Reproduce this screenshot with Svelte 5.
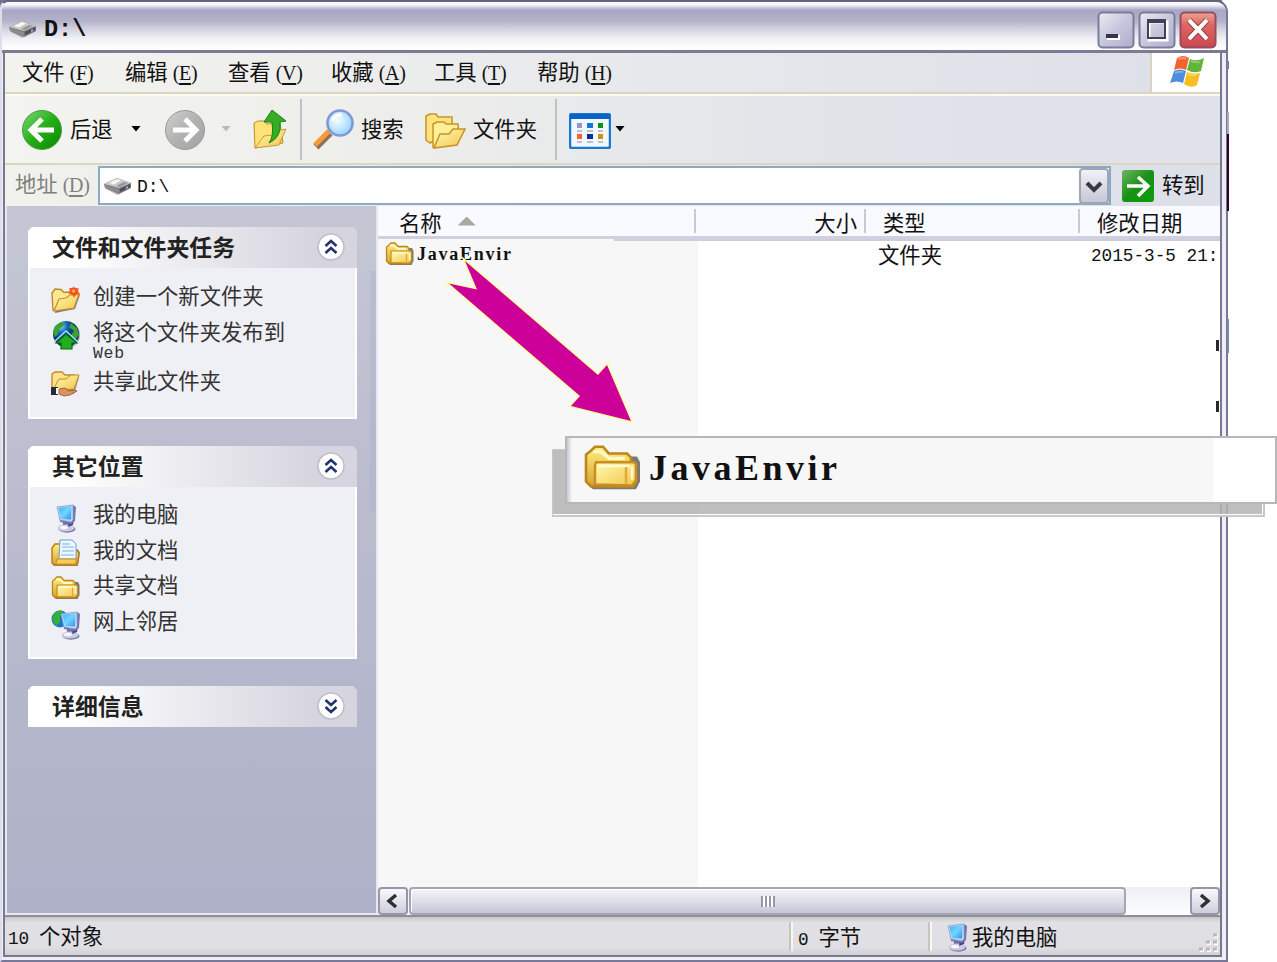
<script>
  const menus = [['文件', 'F'], ['编辑', 'E'], ['查看', 'V'], ['收藏', 'A'], ['工具', 'T'], ['帮助', 'H']];
  const tasks = [['newfolder', '创建一个新文件夹'], ['publish', '将这个文件夹发布到'], ['share', '共享此文件夹']];
  const places = [['computer', '我的电脑'], ['docs', '我的文档'], ['folder', '共享文档'], ['network', '网上邻居']];
</script>

{#snippet drive()}
  <svg class="drive" width="30" height="20" viewBox="0 0 30 20">
    <path d="M3 13l11 6 14-7v-3z" fill="#777" opacity=".45" />
    <path d="M1 8L14 2l14 5v5l-12 6L2 12z" fill="#77777a" />
    <path d="M1 8L14 2l14 5-12 5z" fill="#c9c9c8" />
    <path d="M6 7l8-4 4 1.500-7 4z" fill="#f7f7f7" />
    <path d="M13 10l8-4 4 1-8 4z" fill="#969696" />
    <path d="M2 9l14 4v4L2 12z" fill="#8b8b8c" />
    <path d="M17 13l10-5v3l-10 5z" fill="#4c4c53" />
    <path d="M23 11l2-1v2l-2 1z" fill="#a9a7e8" />
  </svg>
{/snippet}

{#snippet folderShape()}
  <path d="M3 23V8h24l1.500 3v10l-2 4H5z" fill="#444" opacity=".7" />
  <path d="M1.500 21V7l2-1.500L6 3h4l3 3.500h9l2 2v2.500l2.500 1v9L25 23.500H4z" fill="url(#foldBack)" stroke="#bd861c" stroke-width="1.300" />
  <path d="M6 22.500V12.500l.5-1.500h19l1 1v8.500l-2 2.500z" fill="url(#foldFront)" stroke="#c88e20" stroke-width="1.200" />
  <path d="M5 5.500h4l4 3.500h8" fill="none" stroke="#fff8c8" stroke-width="1.800" />
  <path d="M7.500 13h16M24.500 13v7" fill="none" stroke="#fffad4" stroke-width="1.300" />
  <path d="M21.500 13.500v8.500" stroke="#e2a83f" stroke-width="1.200" />
{/snippet}

{#snippet computerShape()}
  <path d="M12 18l10-1-3 10-7-1z" fill="#6865ab" />
  <ellipse cx="16" cy="26" rx="8.500" ry="3.700" fill="#77749f" />
  <ellipse cx="15" cy="25" rx="8.500" ry="3.500" fill="#cccbe3" />
  <path d="M18 18l5-2-1 6-5 2z" fill="#454499" />
  <path d="M7 4l15-2 3 2-1 14-4 3L9 19z" fill="#7576ad" />
  <path d="M6 4l16-2v15l-2 2-11-2z" fill="#c3d8f3" stroke="#8798c4" stroke-width=".7" />
  <path d="M7.500 5l13-2-.5 13.500-10-.5z" fill="url(#screen)" />
  <ellipse cx="13" cy="24.500" rx="4" ry="1.700" fill="#f9f8ff" />
{/snippet}

{#snippet icon(kind)}
  <svg class="small-icon" width="30" height="30" viewBox="0 0 30 30">
    {#if kind === 'folder'}
      {@render folderShape()}
    {:else if kind === 'computer'}
      {@render computerShape()}
    {:else if kind === 'newfolder'}
      <path d="M4 28l20-4 5-14-3-2-22 6z" fill="#444" opacity=".65" />
      <path d="M2 25L1 8l3-4 6 .5 3 3 9-1 2 5-2 12z" fill="#ffe794" stroke="#bd892c" stroke-width="1.400" />
      <path d="M3 26L8 14l7-1 4-3 9-1-5 14z" fill="url(#foldFront)" stroke="#c28e2c" stroke-width="1.200" />
      <path d="M22 1l2 3 4-1-1 3 2 3-4 1-2 3-2-4-4 0 2-3-1-3 4 0z" fill="#ff6b24" />
      <circle cx="23" cy="6.500" r="4" fill="#f65222" />
      <circle cx="22.500" cy="6" r="1.600" fill="#ffb45a" />
    {:else if kind === 'publish'}
      <circle cx="16" cy="15" r="13" fill="#444" opacity=".4" />
      <circle cx="15" cy="14" r="13" fill="url(#globe)" />
      <path d="M4 6l6-4 4 2-3 3-3 2-1 5-3 3-2-5zM20 3l6 5 2 7-4 5-4-5 3-4-5-4z" fill="#3ba234" />
      <path d="M15 14L5 23h5v6h11v-6h5z" fill="#24ad20" stroke="#096b11" stroke-width="1.200" />
      <path d="M3 22L15 11l12 11" fill="none" stroke="#a4e3ff" stroke-width="1.300" />
    {:else if kind === 'share'}
      <path d="M3 24l20 1 5-16-2-3-22 1z" fill="#555" opacity=".5" />
      <path d="M1 22V5l3-2h7l3 3h9l1 13z" fill="#ffe38a" stroke="#c38c24" stroke-width="1.400" />
      <path d="M2 21l6-11h7l5-4h8l-5 14z" fill="url(#foldFront)" stroke="#bf8a24" />
      <path d="M0 18h7v8H0z" fill="#26283b" /><path d="M5 19h4v6H5z" fill="#fff" />
      <path d="M8 20l6-1 4 3 6-1 2 1-7 4-6 1-5-2z" fill="#dc935f" stroke="#8e4d25" stroke-width=".8" />
    {:else if kind === 'docs'}
      <path d="M3 27h24l2-14-3-3H4z" fill="#555" opacity=".55" />
      <path d="M1 24V9l3-4h9v6h13l2 3-1 9-2 3H3z" fill="url(#foldBack)" stroke="#b37a16" stroke-width="1.400" />
      <path d="M8 19L9 1h12l4 4v15H7z" fill="#edf7ff" stroke="#729ace" />
      <path d="M11 5h8M11 8h12M11 12h12M10 16h13" stroke="#7bb3e4" stroke-width="1.200" />
      <path d="M6 20h19v5H5z" fill="#f7cd57" stroke="#c89223" />
    {:else}
      <circle cx="9" cy="9" r="8.500" fill="#1779ca" />
      <path d="M3 3l7-3 3 3-4 3v6l-4 4-4-6z" fill="#35af37" />
      <g transform="translate(4 0)">{@render computerShape()}</g>
    {/if}
  </svg>
{/snippet}

{#snippet chevron(down)}
  <svg class="chevron" width="30" height="30" viewBox="0 0 30 30">
    <circle cx="15" cy="15" r="13" fill="#fff" stroke="#bfc0ca" stroke-width="1.700" />
    <g transform={down ? 'rotate(180 15 15)' : ''} fill="none" stroke="#243369" stroke-width="2.600">
      <path d="M9.500 14l5.500-5 5.500 5M9.500 21l5.500-5 5.500 5" />
    </g>
  </svg>
{/snippet}

<svg class="definitions" width="0" height="0" aria-hidden="true">
  <defs>
    <linearGradient id="foldBack" x2="0" y2="1"><stop stop-color="#fff07e" /><stop offset="1" stop-color="#d7a032" /></linearGradient>
    <linearGradient id="foldFront" x2="1" y2="1"><stop stop-color="#fffab2" /><stop offset="1" stop-color="#f3c64b" /></linearGradient>
    <linearGradient id="screen" x2="1" y2="1"><stop stop-color="#3caeff" /><stop offset=".5" stop-color="#72d5ff" /><stop offset="1" stop-color="#2d91ed" /></linearGradient>
    <radialGradient id="globe" cx=".3" cy=".2"><stop stop-color="#8edafa" /><stop offset=".5" stop-color="#1767b4" /><stop offset="1" stop-color="#07366e" /></radialGradient>
    <linearGradient id="green" x2="1" y2="1"><stop stop-color="#80d779" /><stop offset=".5" stop-color="#24ae16" /><stop offset="1" stop-color="#078503" /></linearGradient>
    <linearGradient id="goGreen" x2="1" y2="1"><stop stop-color="#6cb565" /><stop offset=".5" stop-color="#199016" /><stop offset="1" stop-color="#08a008" /></linearGradient>
    <linearGradient id="gray" x2="1" y2="1"><stop stop-color="#d1d1d1" /><stop offset=".5" stop-color="#b2b2b2" /><stop offset="1" stop-color="#a3a3a3" /></linearGradient>
    <linearGradient id="controlFill" x2="1" y2="1"><stop stop-color="#ececf4" /><stop offset=".5" stop-color="#c7c7dc" /><stop offset="1" stop-color="#acacca" /></linearGradient>
    <linearGradient id="closeFill" x2="0" y2="1"><stop stop-color="#eca592" /><stop offset=".35" stop-color="#df6563" /><stop offset="1" stop-color="#cb484f" /></linearGradient>
    <radialGradient id="lens" cx=".4" cy=".4"><stop stop-color="#f3ffff" /><stop offset="1" stop-color="#a9dcfc" /></radialGradient>
  </defs>
</svg>

<div class="stage">
  <div class="window">
    <header class="title">
      {@render drive()}
      <b>D:\</b>
      <div class="controls">
        <svg width="38" height="38"><rect x="1.500" y="1.500" width="35" height="35" rx="4" class="control" /><path d="M10 24h13v5H10z" fill="#fff" /><path d="M9 23h12v4H9z" fill="#333450" /></svg>
        <svg width="38" height="38"><rect x="1.500" y="1.500" width="35" height="35" rx="4" class="control" /><path d="M11 11h18v18H11z" fill="none" stroke="#fff" stroke-width="3" /><path d="M9 8h19v4H9z" fill="#41415b" /><path d="M10 9h17v18H10z" fill="none" stroke="#41415b" stroke-width="2" /></svg>
        <svg width="38" height="38"><rect x="1.500" y="1.500" width="35" height="35" rx="4" class="close" /><path d="M10 9l18 19M28 9L10 28" stroke="#8e353b" stroke-width="6" /><path d="M10 9l18 19M28 9L10 28" stroke="#fff" stroke-width="4" /></svg>
      </div>
    </header>
    <main>
      <nav>
        {#each menus as [label, key]}<span class="menu">{label}<i>(<u>{key}</u>)</i></span>{/each}
        <div class="flag">
          <svg width="36" height="34" viewBox="0 0 36 34">
            <path d="M8 3q6-4 12 0l-3 12q-6-3-12 0z" fill="#ef652d" />
            <path d="M21 4q7 3 14-1l-3 13q-7 3-14-1z" fill="#61b339" />
            <path d="M5 16q6-3 12 0l-3 12Q8 25 1 28z" fill="#4c8edb" />
            <path d="M18 17q7 3 13 1l-3 12q-6 4-13-1z" fill="#f7be21" />
            <path d="M9 4q5-2 8 0M22 6q5 2 9 1M6 18q4-2 8-1M19 19q5 2 8 1" stroke="#fff" opacity=".3" stroke-width="2" fill="none" />
          </svg>
        </div>
      </nav>

      <div class="toolbar">
        <svg class="back" width="42" height="42" viewBox="0 0 42 42"><circle cx="21" cy="21" r="19.500" fill="url(#green)" stroke="#4b9d42" /><path d="M33 21H11M21 10L10 21l11 11" fill="none" stroke="#fff" stroke-width="5" /></svg>
        <span class="back-label">后退</span><span class="tri back-tri"></span>
        <svg class="forward" width="42" height="42" viewBox="0 0 42 42"><circle cx="21" cy="21" r="19.500" fill="url(#gray)" stroke="#999" /><path d="M9 21h22M21 10l11 11-11 11" fill="none" stroke="#fff" stroke-width="5" /></svg>
        <span class="tri forward-tri"></span>
        <svg class="up" width="36" height="42" viewBox="0 0 36 42"><path d="M3 39L2 14l4-2 7 0 2 3 13-1 3 20z" fill="#ffe278" stroke="#bd8d22" /><path d="M3 39l9-12 8-1 4-4 10-2-7 16z" fill="url(#foldFront)" stroke="#c89a2e" /><path d="M17 34q5-6 3-21h-8L20 1l14 11-6 1q2 15-11 21z" fill="#36ae24" stroke="#178016" /></svg>
        <div class="divider first"></div>
        <svg class="search" width="44" height="44" viewBox="0 0 44 44"><path d="M4 39l14-14" stroke="#91705a" stroke-width="7" /><path d="M3 37l14-14" stroke="#f39b3d" stroke-width="5" /><circle cx="28" cy="15" r="12.500" fill="url(#lens)" stroke="#7f99da" stroke-width="2.700" /><path d="M20 13q3-7 10-6" fill="none" stroke="#fff" stroke-width="3" /></svg>
        <span class="search-label">搜索</span>
        <svg class="folders" width="41" height="38" viewBox="0 0 41 38"><path d="M5 31L1 28V4l4-2 6 0 2 3h14v14z" fill="#ffe47e" stroke="#c99225" stroke-width="1.500" /><path d="M8 35V12l4-2 7 0 2 2h12l1 16z" fill="#fff09b" stroke="#c99225" stroke-width="1.500" /><path d="M9 36l6-14h9l4-5h12l-8 16z" fill="url(#foldFront)" stroke="#c99225" stroke-width="1.500" /></svg>
        <span class="folders-label">文件夹</span>
        <div class="divider second"></div>
        <svg class="views" width="42" height="36" viewBox="0 0 42 36"><rect x="1" y="1" width="40" height="34" rx="2" fill="#eff9ff" stroke="#1c77d0" stroke-width="2.500" /><path d="M1 1h40v5H1z" fill="#0a63c7" /><path d="M8 10h5v5H8z" fill="#a090c8" /><path d="M18 10h6v5h-6z" fill="#1176df" /><path d="M29 10h5v5h-5z" fill="#129014" /><path d="M8 21h5v5H8z" fill="#fc6231" /><path d="M18 21h6v5h-6z" fill="#102b93" /><path d="M29 21h5v5h-5z" fill="#d39111" /><path d="M8 18h5M18 18h6M29 18h5M8 29h5M18 29h6M29 29h5" stroke="#abb0b3" stroke-width="1.500" /></svg>
        <span class="tri view-tri"></span>
      </div>

      <div class="address">
        <span class="address-label">地址<i>(<u>D</u>)</i></span>
        <div class="field">
          {@render drive()}<span>D:\</span>
          <button aria-label="展开"><svg width="18" height="14"><path d="M2 3l7 7 7-7" fill="none" stroke="#3a3a3d" stroke-width="4" /></svg></button>
        </div>
        <svg class="go" width="32" height="32" viewBox="0 0 32 32"><rect width="32" height="32" rx="3" fill="url(#goGreen)" /><path d="M5 16h20M16 7l10 9-10 10" fill="none" stroke="#fff" stroke-width="3.500" /></svg>
        <span class="go-label">转到</span>
      </div>

      <section class="content">
        <aside>
          <div class="panel tasks">
            <header><b>文件和文件夹任务</b>{@render chevron(false)}</header>
            <div class="panel-body">
              {#each tasks as [kind, label]}
                <div class={'task ' + kind}>{@render icon(kind)}<span>{label}{#if kind === 'publish'}<small>Web</small>{/if}</span></div>
              {/each}
            </div>
          </div>
          <div class="panel places">
            <header><b>其它位置</b>{@render chevron(false)}</header>
            <div class="panel-body">
              {#each places as [kind, label]}<div class="task">{@render icon(kind)}<span>{label}</span></div>{/each}
            </div>
          </div>
          <div class="panel details"><header><b>详细信息</b>{@render chevron(true)}</header></div>
          <div class="side-track"></div>
        </aside>

        <div class="list">
          <div class="columns">
            <span class="name-column">名称<em></em></span><span class="size-column">大小</span><span class="type-column">类型</span><span class="date-column">修改日期</span>
          </div>
          <div class="files">
            <div class="name-cell">{@render icon('folder')}<span class="java">JavaEnvir</span></div>
            <span class="type-cell">文件夹</span>
            <span class="date-cell">2015-3-5 21:</span>
          </div>
          <div class="scrollbar">
            <div class="scroll-button"><svg width="16" height="16"><path d="M11 2L4 8l7 6" fill="none" stroke="#303034" stroke-width="3.500" /></svg></div>
            <div class="thumb"><span></span></div>
            <div class="scroll-button right"><svg width="16" height="16"><path d="M4 2l7 6-7 6" fill="none" stroke="#303034" stroke-width="3.500" /></svg></div>
          </div>
        </div>
      </section>
      <footer>
        <span class="objects"><i>10</i> 个对象</span>
        <span class="bytes"><i>0</i> 字节</span>
        <span class="location">{@render icon('computer')}我的电脑</span>
        <svg width="20" height="20" viewBox="0 0 20 20"><path d="M15 3h4M8 10h4M15 10h4M1 17h4M8 17h4M15 17h4" stroke="#fff" stroke-width="4" /><path d="M14 2h4M7 9h4M14 9h4M0 16h4M7 16h4M14 16h4" stroke="#b9b8b2" stroke-width="3" /></svg>
      </footer>
    </main>
  </div>
  <div class="edge"></div>
  <div class="list-rule"></div>
  <div class="tick tick-one"></div><div class="tick tick-two"></div>
  <svg class="arrow" width="1277" height="962" viewBox="0 0 1277 962"><path d="M465 261L598 375l9-10 24 56-60-15 9-10L449 283.500l28 6z" fill="#c09" stroke="#ffffa0" stroke-width="3" stroke-miterlimit="7" paint-order="stroke" /></svg>
  <div class="callout-shadow"></div>
  <div class="callout">
    <svg width="60" height="56" viewBox="0 0 30 29" preserveAspectRatio="none">{@render folderShape()}</svg>
    <span>JavaEnvir</span>
  </div>
</div>

<style>
  :global(body) { background: #fff; overflow: hidden; }
  * { box-sizing: border-box; }
  .definitions { position: absolute; }
  .stage { width: 1277px; height: 962px; position: relative; font: 21.33px/28px "Noto Sans CJK SC", sans-serif; color: #111; white-space: nowrap; overflow: hidden; background: linear-gradient(90deg, #6f7190 1222px, transparent 1222px) no-repeat 0 0 / 100% 8px; }
  svg { display: block; flex-shrink: 0; }
  i { font-family: "Liberation Mono", monospace; font-style: normal; font-size: 17.7px; }
  .window { width: 1228px; height: 962px; padding: 0 4px 3px 4px; background: #eeeef6; border: 2px solid #77779a; border-left: 2px solid #dedeea; border-top-color: #65657f; border-radius: 8px 12px 0 0; }
  .title { height: 51px; margin: 0 -4px 0 -4px; padding: 0 9px 0 6px; display: flex; align-items: center; border-bottom: 3px solid #7b7b98; background: linear-gradient(#fff 0, #f4f4f9 6%, #a7a6c4 17%, #b4b3ca 40%, #d4d4e1 57%, #f2f2f6 78%, #fff 100%); border-radius: 8px 10px 0 0; }
  .title b { margin: 7px 0 0 6px; font: bold 23.5px "Liberation Mono", monospace; }
  .title .drive { margin-top: 5px; }
  .controls { margin-left: auto; padding-top: 7px; display: flex; gap: 3px; }
  .control { fill: url(#controlFill); stroke: #7b7c9a; stroke-width: 2; }
  .close { fill: url(#closeFill); stroke: #964d60; stroke-width: 2; }
  main { height: 904px; border: solid #77778f; border-width: 0 2px 2px; margin-left: -3px; display: flex; flex-direction: column; background: #f0f0ec; }
  nav { height: 41px; flex-shrink: 0; padding-left: 17px; display: flex; border-bottom: 2px solid #ddd6bf; background: linear-gradient(90deg, #f3f3ee, #dddfe9); }
  .menu { width: 103px; padding-top: 4px; }
  .menu i, .address-label i { margin-left: 5px; font-family: "Liberation Serif", serif; font-size: 20px; letter-spacing: -.3px; }
  u { text-underline-offset: 3px; text-decoration-thickness: 1.5px; }
  .flag { width: 70px; margin-left: auto; padding: 2px 0 0 17px; border-left: 2px solid #d9d3bc; background: white; }
  .toolbar { height: 71px; flex-shrink: 0; border-top: 2px solid #faf9f3; border-bottom: 2px solid #ddd6bf; padding-left: 16px; display: flex; align-items: center; background: linear-gradient(90deg, #f3f3ef 0, #eeeeeb 30%, #e1e3e9 70%, #dfe1eb); }
  .toolbar > span:not(.tri) { margin-top: -4px; }
  .back-label { margin-left: 7px; width: 43px; }
  .tri { width: 10px; height: 6px; flex: none; background: #000; clip-path: polygon(0 0, 100% 0, 50% 100%); margin-top: -2px; }
  .back-tri { margin-left: 18px; }
  .forward { margin-left: 23px; }
  .forward-tri { margin-left: 15px; background: #bbb; }
  .up { margin-left: 21px; }
  .divider { width: 2px; height: 61px; background: #bec0c9; }
  .first { margin-left: 12px; }
  .search { margin-left: 10px; }
  .search-label { margin-left: 5px; width: 43px; }
  .folders { margin: 2px 0 0 21px; }
  .folders-label { margin-left: 7px; width: 64px; }
  .second { margin-left: 18px; }
  .views { margin: 2px 0 0 12px; }
  .view-tri { margin-left: 4px; }
  .address { height: 41px; flex-shrink: 0; padding: 1px 13px 1px 10px; display: flex; align-items: center; background: linear-gradient(90deg, #f1f1ed, #dddfe9); }
  .address-label { width: 83px; color: #81817b; align-self: flex-start; padding-top: 3px; flex-shrink: 0; }
  .field { width: 1013px; height: 39px; padding-left: 3px; border: 2px solid #8daac4; background: #fff; display: flex; align-items: center; }
  .field > span { font: 18px "Liberation Mono", monospace; margin: 3px 0 0 4px; }
  button { margin-left: auto; width: 30px; height: 36px; border: 2px solid #a2a4b3; border-radius: 4px; padding: 7px 4px 5px; background: linear-gradient(#f1f1f6, #c6c7d7); }
  .go { margin-left: 11px; }
  .go-label { margin: -3px 0 0 8px; }
  .content { display: flex; height: 711px; flex-shrink: 0; border-bottom: 2px solid #8e8e95; }
  aside { width: 373px; padding: 21px 20px 0 21px; flex-shrink: 0; position: relative; background: linear-gradient(#c4c7d3, #b6b8cc 60%, #afb1c8); border: solid #e7e7ef; border-width: 0 2px 2px; }
  .panel { width: 329px; margin-bottom: 27px; }
  .panel header { height: 41px; padding: 0 11px 0 24px; display: flex; align-items: center; background: linear-gradient(90deg, #fff 12%, #d6d5df 88%); clip-path: polygon(4px 0, calc(100% - 4px) 0, 100% 4px, 100% 100%, 0 100%, 0 4px); }
  .panel b { font-size: 22.9px; flex: 1; color: #222; margin-top: -4px; }
  .chevron { margin-top: -1px; }
  .panel-body { border: 2px solid #fff; border-top: 0; background: #eff0f5; padding: 13px 0 0 21px; color: #333; }
  .tasks .panel-body { height: 151px; }
  .places .panel-body { height: 172px; padding-top: 12px; }
  .task { display: flex; height: 35.7px; }
  .task > svg { margin-top: 4px; }
  .task > span { margin-left: 12px; }
  .publish { height: 49.5px; }
  .publish > svg { margin-top: 3px; }
  .publish > span { line-height: 27px; }
  .share > svg { margin-top: 3px; }
  small { display: block; font: 16.5px/20px "Liberation Mono", monospace; letter-spacing: .7px; }
  .side-track { position: absolute; right: 0; top: 65px; width: 6px; height: 240px; background: #aeb0ce66; }
  .list { flex: 1; min-width: 0; display: flex; flex-direction: column; background: #fff; }
  .columns { height: 33px; flex-shrink: 0; display: flex; align-items: center; border-bottom: 3px solid #d0d0df; background: #f9faff; }
  .columns span { height: 24px; line-height: 23px; padding-top: 1px; border-right: 2px solid #c8c8d8; }
  .columns .name-column { width: 318px; padding: 0 0 0 21px; display: flex; align-items: center; }
  em { width: 18px; height: 9px; margin-left: 16px; background: #aaa899; clip-path: polygon(50% 0, 100% 100%, 0 100%); }
  .columns .size-column { width: 170px; text-align: right; padding-right: 7px; }
  .type-column { width: 214px; padding-left: 17px; }
  .columns .date-column { padding-left: 17px; border: 0; }
  .files { flex: 1; display: flex; background: #fff; }
  .name-cell { width: 320px; padding: 1px 0 0 7px; display: flex; background: #f7f7f7; }
  .java { margin-left: 2px; font: bold 18px/29px "Liberation Serif", serif; letter-spacing: 1.75px; }
  .type-cell { width: 213px; padding: 1px 0 0 180px; }
  .date-cell { margin-left: 180px; width: 128px; overflow: hidden; font: 17.7px/34px "Liberation Mono", monospace; }
  .scrollbar { height: 28px; display: flex; background: linear-gradient(#eff0f3, #fdfdff); }
  .scroll-button { width: 30px; height: 28px; padding: 4px 5px; border: 2px solid #9596aa; border-radius: 4px; background: linear-gradient(#f9f9fd, #cdcedd); }
  .thumb { width: 717px; margin-left: 1px; border: 2px solid #a4a5b5; border-radius: 4px; box-shadow: inset 1px 1px #fff; background: linear-gradient(#f4f4f8, #dadbe6 60%, #c4c5d5); display: grid; place-items: center; }
  .thumb span { width: 14px; height: 11px; background: repeating-linear-gradient(90deg, #9698a8 0 2px, #fff 2px 4px); }
  .right { margin-left: auto; }
  footer { flex: 1; display: flex; align-items: center; padding: 0 1px 0 3px; background: linear-gradient(#c7c7c9 0, #e0e0e5 14%, #dedee3 80%, #cfcfd4); }
  .objects { width: 781px; padding-top: 2px; }
  .bytes, .location { height: 29px; border-left: 2px solid #c9c5b9; box-shadow: inset 2px 0 #f7f7f7; padding-left: 7px; }
  .objects i, .bytes i { margin-right: 5px; }
  .bytes { width: 139px; }
  .location { display: flex; padding-left: 12px; }
  footer > svg { margin: 14px 0 0 auto; }
  .edge { position: absolute; left: 1227px; top: 52px; width: 2px; height: 861px; background: linear-gradient(transparent 0 1%, #7d7c99 1% 2%, transparent 2% 7%, #aaa9bf 7% 9.5%, #310023 9.5% 18.5%, transparent 18.5% 31%, #7889ae 31% 35%, transparent 35%); }
  .list-rule { position: absolute; left: 614px; top: 239px; width: 606px; height: 2px; background: #cdcddd; }
  .tick { position: absolute; left: 1216px; width: 3px; height: 11px; background: #29292b; }
  .tick-one { top: 340px; } .tick-two { top: 401px; }
  .arrow { position: absolute; inset: 0; pointer-events: none; }
  .callout-shadow { position: absolute; left: 552px; top: 449px; width: 713px; height: 68px; border: 2px solid #c8c8c8; border-width: 1px 2px 2px 1px; background: #b4b4b4d9; box-shadow: inset -1px -1px #fff; }
  .callout { position: absolute; left: 565px; top: 436px; width: 712px; height: 68px; padding: 3px 0 0 16px; display: flex; border: 2px solid #b7b7b7; background: linear-gradient(90deg, #c5c8d6 0, #f7f7f7 5px, #f7f7f7 646px, #fff 647px); }
  .callout span { margin-left: 6px; font: bold 36px/54px "Liberation Serif", serif; letter-spacing: 3.5px; }
</style>
